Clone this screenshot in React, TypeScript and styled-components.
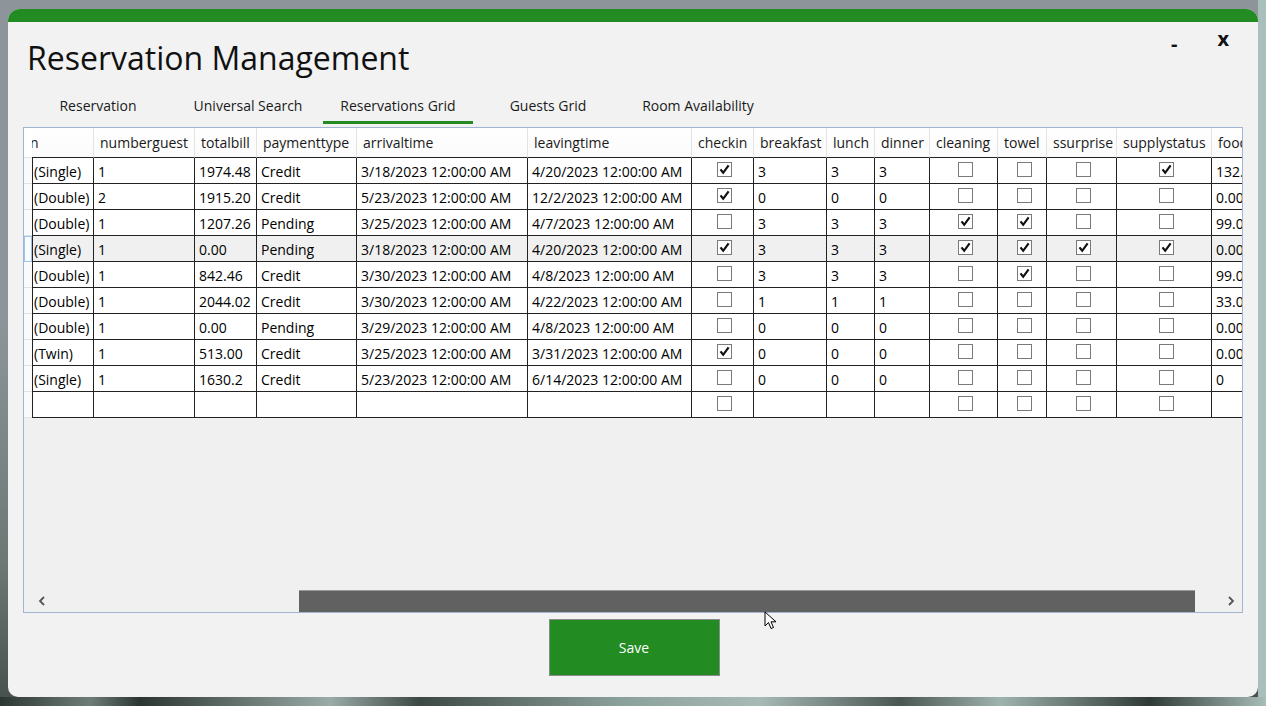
import styled, { createGlobalStyle } from "styled-components";

const GlobalStyle = createGlobalStyle`
html, body {
  margin: 0;
  padding: 0;
}
body {
  font-family: "Open Sans", "Noto Sans", sans-serif;
  overflow: hidden;
}
`;

const Page = styled.div`
position: relative;
box-sizing: border-box;
width: 1266px;
height: 706px;
padding: 9px 8px;
background:
  linear-gradient(90deg, #2c3531 0, #6f7d79 90px, #2b3430 140px, #9aaba7 330px, #3d4844 420px, #8ca09b 620px, #a7bab6 760px, #4a5652 900px, #9fb3ae 1000px, #2f3935 1150px, #a8bdb9 1266px) left bottom / 100% 9px no-repeat,
  linear-gradient(90deg, transparent 1258px, #a9bfbb 1258px),
  linear-gradient(180deg, #8d949a 0%, #8d959a 45%, #6b7874 80%, #45504c 100%);
`;

const Window = styled.div`
height: 688px;
background: #f2f2f2;
border-radius: 12px 12px 10px 10px;
overflow: hidden;
display: flex;
flex-direction: column;
`;

const TopBar = styled.div`
height: 13px;
background: #228b22;
flex-shrink: 0;
`;

const TitleRow = styled.div`
display: flex;
justify-content: space-between;
align-items: flex-start;
padding: 0 29px 0 19px;
`;

const Title = styled.h1`
margin: 17px 0 0;
font-size: 32px;
line-height: 38px;
font-weight: 400;
color: #111;
`;

const Controls = styled.div`
display: flex;
gap: 40px;
margin-top: 5px;
`;

const ControlButton = styled.span<{ $low?: boolean }>`
font-size: 20px;
font-weight: 700;
color: #111;
line-height: 24px;
padding-top: ${(p) => (p.$low ? "5px" : "0")};
`;

const Tabs = styled.div`
display: flex;
margin: 13px 15px 3px;
`;

const Tab = styled.div<{ $active?: boolean }>`
width: 150px;
height: 34px;
box-sizing: border-box;
display: flex;
align-items: center;
justify-content: center;
font-size: 14px;
color: #1a1a1a;
border-bottom: 3px solid ${(p) => (p.$active ? "#228b22" : "transparent")};
`;

const Grid = styled.div`
margin: 0 15px;
height: 486px;
box-sizing: border-box;
border: 1px solid #a0b6d0;
background: #f0f0f0;
display: flex;
flex-direction: column;
`;

const TableArea = styled.div`
flex: 1;
overflow: hidden;
`;

const Row = styled.div<{ $cols: string }>`
display: grid;
grid-template-columns: ${(p) => p.$cols};
width: max-content;
`;

const RowHead = styled.div<{ $selected?: boolean }>`
box-sizing: border-box;
height: 26px;
background: #fafafa;
border-bottom: 1px solid #e2e2e2;
border: ${(p) => (p.$selected ? "1px solid #9cc3eb" : "")};
`;

const HeadCorner = styled.div`
height: 30px;
background: #fff;
border-bottom: 1px solid #e2e2e2;
box-sizing: border-box;
`;

const HeadCell = styled.div<{ $first?: boolean }>`
box-sizing: border-box;
height: 30px;
background: linear-gradient(180deg, #ffffff 0%, #fbfbfb 100%);
border-right: 1px solid #e3e3e3;
border-bottom: 1px solid #222;
font-size: 14px;
color: #1a1a1a;
padding-left: ${(p) => (p.$first ? "0" : "6px")};
text-indent: ${(p) => (p.$first ? "-2px" : "0")};
display: flex;
align-items: center;
white-space: nowrap;
overflow: hidden;
`;

const Cell = styled.div<{ $first?: boolean; $check?: boolean; $selected?: boolean }>`
box-sizing: border-box;
height: 26px;
background: ${(p) => (p.$selected ? "#f0f0f0" : "#fff")};
border-right: 1px solid #222;
border-bottom: 1px solid #222;
border-left: ${(p) => (p.$first ? "1px solid #222" : "none")};
font-size: 14px;
color: #000;
padding-left: ${(p) => (p.$first ? "1px" : "4px")};
padding-top: 1px;
display: flex;
align-items: center;
justify-content: ${(p) => (p.$check ? "center" : "flex-start")};
white-space: nowrap;
overflow: hidden;
`;

const CheckBox = styled.svg`
width: 15px;
height: 15px;
margin-top: -4px;
`;

const ScrollBar = styled.div`
height: 22px;
display: flex;
align-items: stretch;
flex-shrink: 0;
`;

const Arrow = styled.div<{ $w: number }>`
width: ${(p) => p.$w}px;
display: flex;
align-items: center;
justify-content: center;
`;

const Track = styled.div`
flex: 1;
`;

const Thumb = styled.div`
margin-left: 239px;
width: 896px;
height: 100%;
box-sizing: border-box;
background: #616161;
border-top: 1px solid #9a9a9a;
`;

const Footer = styled.div`
display: flex;
justify-content: center;
padding: 6px 0 0 2px;
`;

const SaveButton = styled.button`
width: 171px;
height: 57px;
background: #228b22;
border: 1px solid #8a8a8a;
color: #fff;
font-family: "Open Sans", "Noto Sans", sans-serif;
font-size: 14px;
cursor: pointer;
`;

const Pointer = styled.svg`
position: absolute;
left: 764px;
top: 611px;
width: 14px;
height: 20px;
`;

type Col = { label: string; width: number; check?: boolean };

const columns: Col[] = [
  { label: "n", width: 62 },
  { label: "numberguest", width: 101 },
  { label: "totalbill", width: 62 },
  { label: "paymenttype", width: 100 },
  { label: "arrivaltime", width: 171 },
  { label: "leavingtime", width: 164 },
  { label: "checkin", width: 62, check: true },
  { label: "breakfast", width: 73 },
  { label: "lunch", width: 48 },
  { label: "dinner", width: 55 },
  { label: "cleaning", width: 68, check: true },
  { label: "towel", width: 49, check: true },
  { label: "ssurprise", width: 70, check: true },
  { label: "supplystatus", width: 95, check: true },
  { label: "foodbill", width: 90 },
];

const colTemplate = "8px " + columns.map((c) => c.width + "px").join(" ");

type Value = string | boolean;

const rows: Value[][] = [
  ["(Single)", "1", "1974.48", "Credit", "3/18/2023 12:00:00 AM", "4/20/2023 12:00:00 AM", true, "3", "3", "3", false, false, false, true, "132.00"],
  ["(Double)", "2", "1915.20", "Credit", "5/23/2023 12:00:00 AM", "12/2/2023 12:00:00 AM", true, "0", "0", "0", false, false, false, false, "0.00"],
  ["(Double)", "1", "1207.26", "Pending", "3/25/2023 12:00:00 AM", "4/7/2023 12:00:00 AM", false, "3", "3", "3", true, true, false, false, "99.00"],
  ["(Single)", "1", "0.00", "Pending", "3/18/2023 12:00:00 AM", "4/20/2023 12:00:00 AM", true, "3", "3", "3", true, true, true, true, "0.00"],
  ["(Double)", "1", "842.46", "Credit", "3/30/2023 12:00:00 AM", "4/8/2023 12:00:00 AM", false, "3", "3", "3", false, true, false, false, "99.00"],
  ["(Double)", "1", "2044.02", "Credit", "3/30/2023 12:00:00 AM", "4/22/2023 12:00:00 AM", false, "1", "1", "1", false, false, false, false, "33.00"],
  ["(Double)", "1", "0.00", "Pending", "3/29/2023 12:00:00 AM", "4/8/2023 12:00:00 AM", false, "0", "0", "0", false, false, false, false, "0.00"],
  ["(Twin)", "1", "513.00", "Credit", "3/25/2023 12:00:00 AM", "3/31/2023 12:00:00 AM", true, "0", "0", "0", false, false, false, false, "0.00"],
  ["(Single)", "1", "1630.2", "Credit", "5/23/2023 12:00:00 AM", "6/14/2023 12:00:00 AM", false, "0", "0", "0", false, false, false, false, "0"],
  ["", "", "", "", "", "", false, "", "", "", false, false, false, false, ""],
];

const tabs = ["Reservation", "Universal Search", "Reservations Grid", "Guests Grid", "Room Availability"];

function Check({ checked }: { checked: boolean }) {
  return (
    <CheckBox viewBox="0 0 15 15">
      <rect x="0.5" y="0.5" width="14" height="14" fill="#fff" stroke="#7a7a7a" />
      {checked ? (
        <path d="M3.5 7.4 L6.2 10.8 L11.6 3.4" fill="none" stroke="#111" strokeWidth="2.2" />
      ) : null}
    </CheckBox>
  );
}

function Chevron({ dir }: { dir: "left" | "right" }) {
  return (
    <svg width="8" height="10" viewBox="0 0 8 10">
      <path
        d={dir === "left" ? "M6 1 L2 5 L6 9" : "M2 1 L6 5 L2 9"}
        fill="none"
        stroke="#555"
        strokeWidth="1.8"
      />
    </svg>
  );
}

export default function App() {
  return (
    <>
      <GlobalStyle />
      <Page>
        <Window>
          <TopBar />
          <TitleRow>
            <Title>Reservation Management</Title>
            <Controls>
              <ControlButton $low>-</ControlButton>
              <ControlButton>x</ControlButton>
            </Controls>
          </TitleRow>
          <Tabs>
            {tabs.map((t) => (
              <Tab key={t} $active={t === "Reservations Grid"}>{t}</Tab>
            ))}
          </Tabs>
          <Grid>
            <TableArea>
              <Row $cols={colTemplate}>
                <HeadCorner />
                {columns.map((c, i) => (
                  <HeadCell key={c.label} $first={i === 0}>{c.label}</HeadCell>
                ))}
              </Row>
              {rows.map((r, ri) => {
                const selected = ri === 3;
                return (
                  <Row key={ri} $cols={colTemplate}>
                    <RowHead $selected={selected} />
                    {r.map((v, ci) => (
                      <Cell key={ci} $first={ci === 0} $check={columns[ci].check} $selected={selected}>
                        {typeof v === "boolean" ? <Check checked={v} /> : v}
                      </Cell>
                    ))}
                  </Row>
                );
              })}
            </TableArea>
            <ScrollBar>
              <Arrow $w={36}><Chevron dir="left" /></Arrow>
              <Track><Thumb /></Track>
              <Arrow $w={22}><Chevron dir="right" /></Arrow>
            </ScrollBar>
          </Grid>
          <Footer>
            <SaveButton>Save</SaveButton>
          </Footer>
        </Window>
        <Pointer viewBox="0 0 14 20">
          <path d="M1 1 L1 15 L4.5 11.5 L7 17.5 L9.5 16.5 L7 10.8 L12 10.8 Z" fill="#fff" stroke="#000" strokeWidth="1" />
        </Pointer>
      </Page>
    </>
  );
}
